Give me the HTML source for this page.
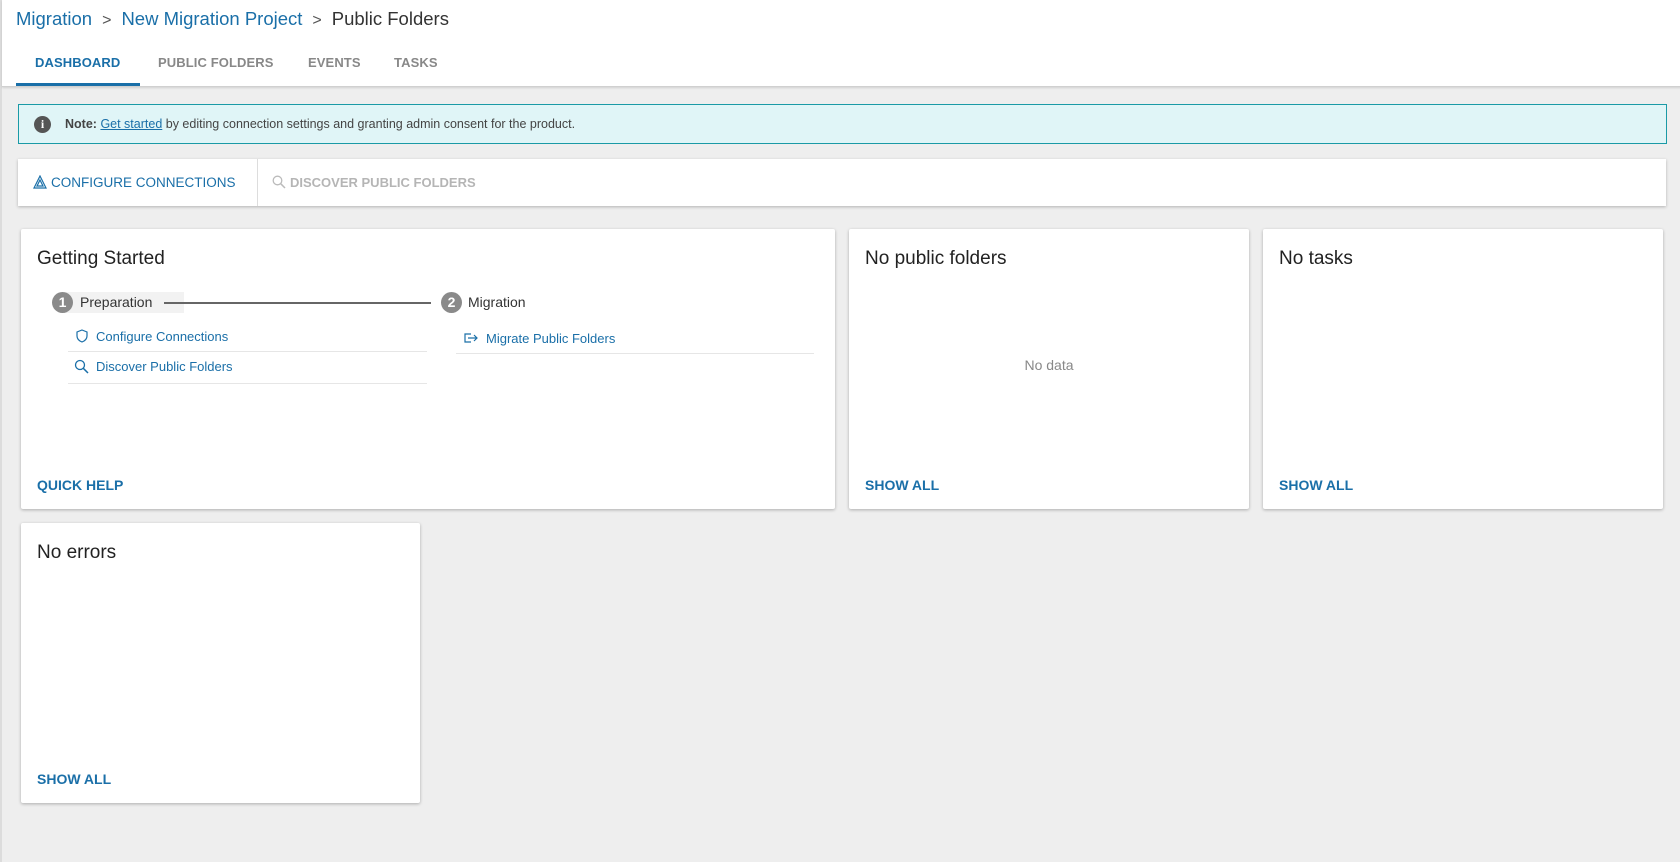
<!DOCTYPE html>
<html><head><meta charset="utf-8"><style>
*{box-sizing:border-box;margin:0;padding:0}
body{width:1680px;height:862px;overflow:hidden;background:#eeeeee;font-family:"Liberation Sans",sans-serif;position:relative;border-left:2px solid #dcdcdc}
.hdr{position:absolute;left:0;top:0;width:1680px;height:87px;background:#fff;border-bottom:1px solid #d0d0d0;box-shadow:0 1px 2px rgba(0,0,0,.12)}
.bc{position:absolute;left:14px;top:8px;font-size:18.5px;color:#1a6fa8;white-space:nowrap}
.bc .s{color:#555;margin:0 10px;font-size:16px}
.bc .cur{color:#333}
.tab{position:absolute;top:55px;font-size:13px;font-weight:bold;color:#888;letter-spacing:.1px}
.ul{position:absolute;left:14px;top:83px;width:124px;height:3px;background:#1a6fa8}
.note{position:absolute;left:16px;top:104px;width:1649px;height:40px;background:#e0f5f7;border:1px solid #1a9aa6;font-size:12.5px;color:#444}
.note .ic{position:absolute;left:15px;top:11px;width:17px;height:17px;border-radius:50%;background:#555;color:#fff;font-weight:bold;font-size:12px;text-align:center;line-height:17px;font-family:"Liberation Serif",serif}
.note .t{position:absolute;left:46px;top:12px}
.note a{color:#1a6fa8;text-decoration:underline}
.tb{position:absolute;left:16px;top:159px;width:1648px;height:47px;background:#fff;box-shadow:0 1px 3px rgba(0,0,0,.25)}
.tb .b1{position:absolute;left:15px;top:16px;font-size:13.5px;color:#1a6fa8;white-space:nowrap}
.tb .div{position:absolute;left:239px;top:0;width:1px;height:47px;background:#ddd}
.tb .b2{position:absolute;left:254px;top:16px;font-size:13px;color:#b5b5b5;font-weight:bold;white-space:nowrap}
.card{position:absolute;background:#fff;box-shadow:0 1px 3px rgba(0,0,0,.28);border-radius:2px}
.card h2{position:absolute;left:16px;top:19px;font-size:19px;font-weight:normal;color:#222}
.card .sa{position:absolute;left:16px;top:248px;font-size:14px;font-weight:bold;color:#1a6fa8}
.circ{position:absolute;width:21px;height:21px;border-radius:50%;background:#8a8a8a;color:#fff;font-weight:bold;font-size:14px;text-align:center;line-height:21px}
.lnk{position:absolute;font-size:13px;color:#1a6fa8;white-space:nowrap}
.hr{position:absolute;height:1px;background:#e6e6e6}
</style></head><body>
<div class="hdr">
<div class="bc">Migration<span class="s">&gt;</span>New Migration Project<span class="s">&gt;</span><span class="cur">Public Folders</span></div>
<div class="tab" style="left:33px;color:#1a6fa8">DASHBOARD</div>
<div class="tab" style="left:156px">PUBLIC FOLDERS</div>
<div class="tab" style="left:306px">EVENTS</div>
<div class="tab" style="left:392px">TASKS</div>
<div class="ul"></div>
</div>
<div class="note"><div class="ic">i</div><div class="t"><b>Note:</b> <a>Get started</a> by editing connection settings and granting admin consent for the product.</div></div>
<div class="tb">
<div class="b1"><svg width="14" height="14" viewBox="0 0 14 14" style="vertical-align:-2px;margin-right:4px"><path d="M7 1L13 13H1Z M7 5L10 11H4Z" fill="none" stroke="#1a6fa8" stroke-width="1.2"/></svg>CONFIGURE CONNECTIONS</div>
<div class="div"></div>
<div class="b2"><svg width="14" height="14" viewBox="0 0 14 14" style="vertical-align:-2px;margin-right:4px"><circle cx="5.5" cy="5.5" r="4.3" fill="none" stroke="#bbb" stroke-width="1.3"/><path d="M8.7 8.7L13 13" stroke="#bbb" stroke-width="1.5"/></svg>DISCOVER PUBLIC FOLDERS</div>
</div>

<div class="card" style="left:19px;top:229px;width:814px;height:280px">
<h2>Getting Started</h2>
<div style="position:absolute;left:43px;top:63px;width:120px;height:21px;background:#f2f2f2"></div>
<div class="circ" style="left:31px;top:63px">1</div>
<div style="position:absolute;left:59px;top:65px;font-size:14px;color:#333">Preparation</div>
<div style="position:absolute;left:143px;top:73px;width:267px;height:2px;background:#666"></div>
<div class="circ" style="left:420px;top:63px">2</div>
<div style="position:absolute;left:447px;top:65px;font-size:14px;color:#333">Migration</div>
<div class="lnk" style="left:55px;top:100px"><svg width="12" height="14" viewBox="0 0 12 14" style="vertical-align:-2px;margin-right:8px"><path d="M6 1L11 3V7C11 10 8.5 12 6 13C3.5 12 1 10 1 7V3Z" fill="none" stroke="#1a6fa8" stroke-width="1.2"/></svg>Configure Connections</div>
<div class="hr" style="left:47px;top:122px;width:359px"></div>
<div class="lnk" style="left:53px;top:130px"><svg width="15" height="15" viewBox="0 0 15 15" style="vertical-align:-3px;margin-right:7px"><circle cx="6" cy="6" r="4.5" fill="none" stroke="#1a6fa8" stroke-width="1.3"/><path d="M9.3 9.3L14 14" stroke="#1a6fa8" stroke-width="1.5"/></svg>Discover Public Folders</div>
<div class="hr" style="left:47px;top:154px;width:359px"></div>
<div class="lnk" style="left:443px;top:102px"><svg width="15" height="12" viewBox="0 0 15 12" style="vertical-align:-1px;margin-right:7px"><path d="M7 2H1V10H7 M4 6H13 M10 3L13 6L10 9" fill="none" stroke="#1a6fa8" stroke-width="1.2"/></svg>Migrate Public Folders</div>
<div class="hr" style="left:435px;top:124px;width:358px"></div>
<div class="sa">QUICK HELP</div>
</div>

<div class="card" style="left:847px;top:229px;width:400px;height:280px">
<h2>No public folders</h2>
<div style="position:absolute;left:0;width:100%;text-align:center;top:128px;font-size:14px;color:#888">No data</div>
<div class="sa">SHOW ALL</div>
</div>
<div class="card" style="left:1261px;top:229px;width:400px;height:280px">
<h2>No tasks</h2>
<div class="sa">SHOW ALL</div>
</div>
<div class="card" style="left:19px;top:523px;width:399px;height:280px">
<h2>No errors</h2>
<div class="sa">SHOW ALL</div>
</div>
</body></html>
